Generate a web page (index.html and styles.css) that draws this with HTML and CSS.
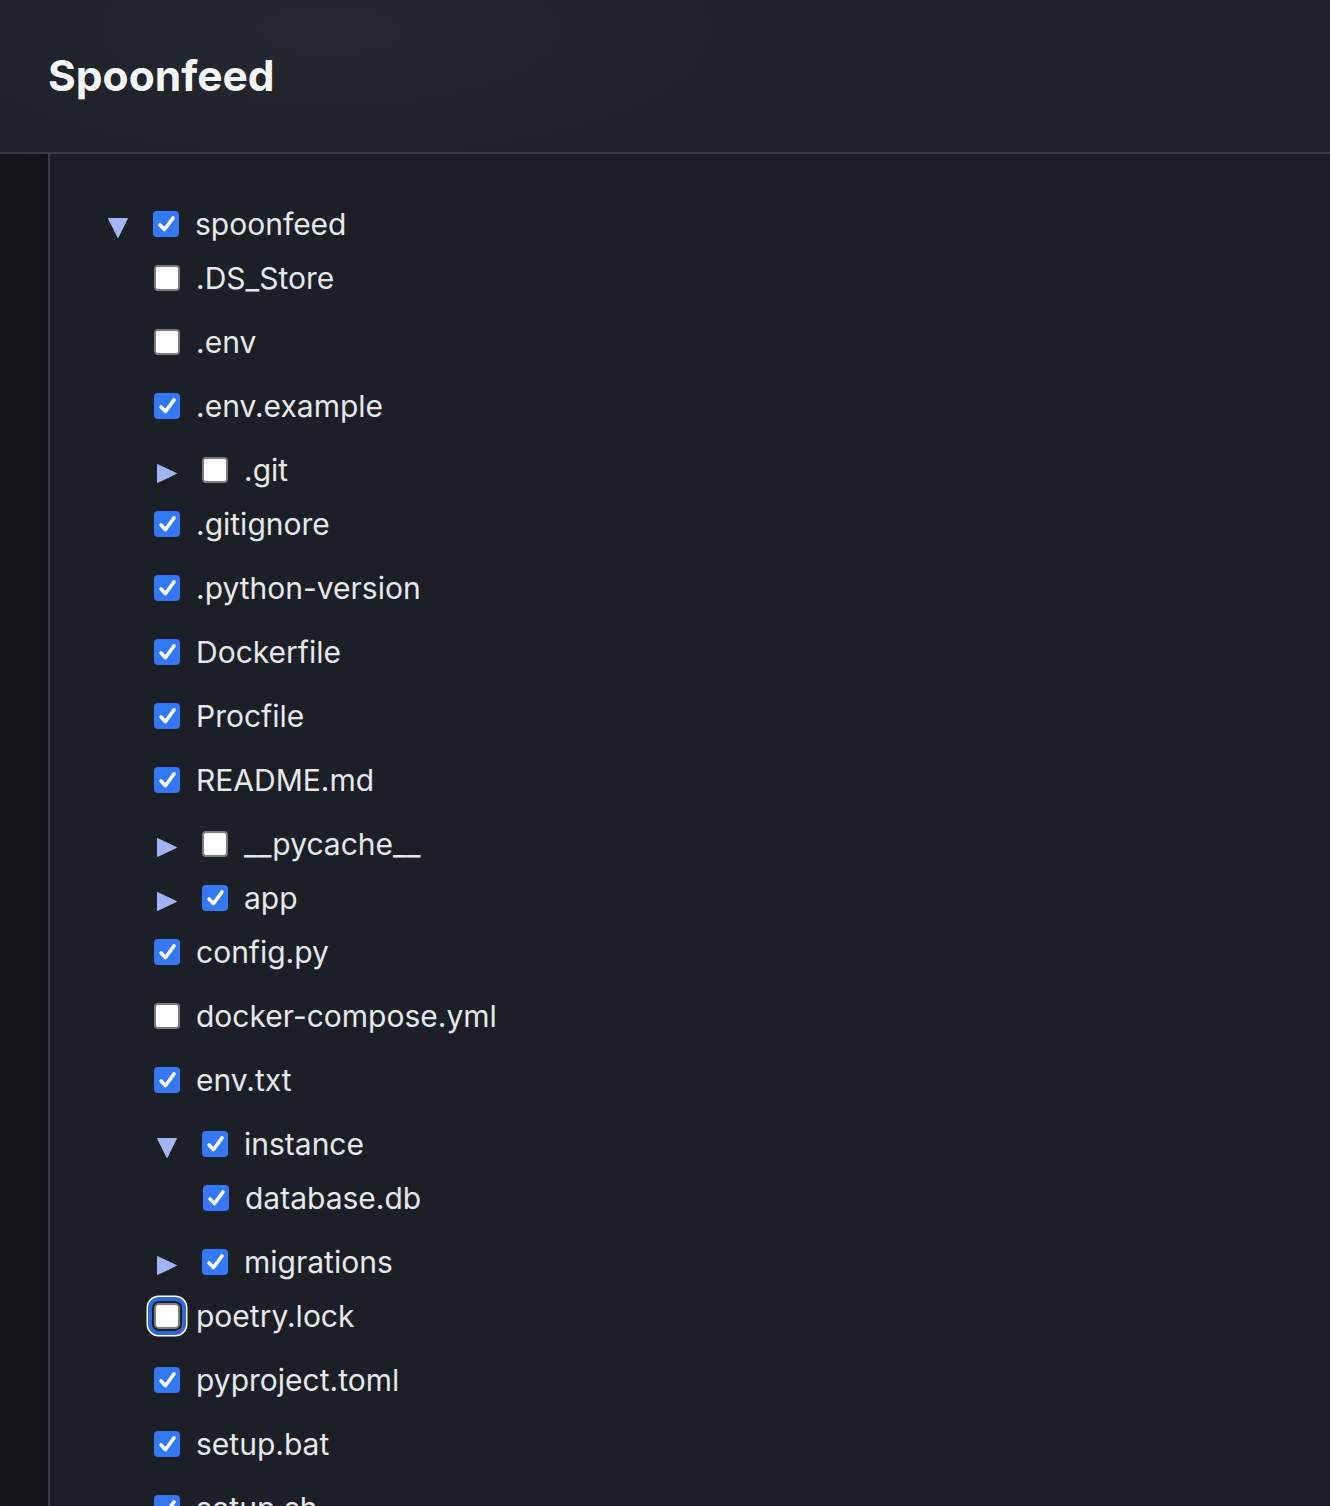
FILE: index.html
```html
<!DOCTYPE html>
<html lang="en">
<head>
<meta charset="utf-8">
<title>Spoonfeed</title>
<link rel="stylesheet" href="styles.css">
</head>
<body>
<header class="topbar">
  <h1 class="title">Spoonfeed</h1>
</header>
<div class="layout">
  <aside class="sidebar"></aside>
  <main class="main">
    <ul class="tree">
      <li class="folder">
        <div class="row folder-row">
          <span class="toggle"><svg class="tri" viewBox="0 0 20 20"><polygon points="0.5,0.5 19.5,0.5 10,19.5"/></svg></span>
          <span class="cb on"><svg viewBox="0 0 26 26"><path d="M7 14 L11.5 18.5 L20 7"/></svg></span>
          <span class="name">spoonfeed</span>
        </div>
        <ul class="tree children">
          <li class="row file"><span class="cb"></span><span class="name">.DS_Store</span></li>
          <li class="row file"><span class="cb"></span><span class="name">.env</span></li>
          <li class="row file"><span class="cb on"><svg viewBox="0 0 26 26"><path d="M7 14 L11.5 18.5 L20 7"/></svg></span><span class="name">.env.example</span></li>
          <li class="folder">
            <div class="row folder-row">
              <span class="toggle"><svg class="tri" viewBox="0 0 20 20"><polygon points="0.5,0.5 19.5,9.5 0.5,18.5"/></svg></span>
              <span class="cb"></span>
              <span class="name">.git</span>
            </div>
          </li>
          <li class="row file"><span class="cb on"><svg viewBox="0 0 26 26"><path d="M7 14 L11.5 18.5 L20 7"/></svg></span><span class="name">.gitignore</span></li>
          <li class="row file"><span class="cb on"><svg viewBox="0 0 26 26"><path d="M7 14 L11.5 18.5 L20 7"/></svg></span><span class="name">.python-version</span></li>
          <li class="row file"><span class="cb on"><svg viewBox="0 0 26 26"><path d="M7 14 L11.5 18.5 L20 7"/></svg></span><span class="name">Dockerfile</span></li>
          <li class="row file"><span class="cb on"><svg viewBox="0 0 26 26"><path d="M7 14 L11.5 18.5 L20 7"/></svg></span><span class="name">Procfile</span></li>
          <li class="row file"><span class="cb on"><svg viewBox="0 0 26 26"><path d="M7 14 L11.5 18.5 L20 7"/></svg></span><span class="name">README.md</span></li>
          <li class="folder">
            <div class="row folder-row">
              <span class="toggle"><svg class="tri" viewBox="0 0 20 20"><polygon points="0.5,0.5 19.5,9.5 0.5,18.5"/></svg></span>
              <span class="cb"></span>
              <span class="name">__pycache__</span>
            </div>
          </li>
          <li class="folder">
            <div class="row folder-row">
              <span class="toggle"><svg class="tri" viewBox="0 0 20 20"><polygon points="0.5,0.5 19.5,9.5 0.5,18.5"/></svg></span>
              <span class="cb on"><svg viewBox="0 0 26 26"><path d="M7 14 L11.5 18.5 L20 7"/></svg></span>
              <span class="name">app</span>
            </div>
          </li>
          <li class="row file"><span class="cb on"><svg viewBox="0 0 26 26"><path d="M7 14 L11.5 18.5 L20 7"/></svg></span><span class="name">config.py</span></li>
          <li class="row file"><span class="cb"></span><span class="name">docker-compose.yml</span></li>
          <li class="row file"><span class="cb on"><svg viewBox="0 0 26 26"><path d="M7 14 L11.5 18.5 L20 7"/></svg></span><span class="name">env.txt</span></li>
          <li class="folder">
            <div class="row folder-row">
              <span class="toggle"><svg class="tri" viewBox="0 0 20 20"><polygon points="0.5,0.5 19.5,0.5 10,19.5"/></svg></span>
              <span class="cb on"><svg viewBox="0 0 26 26"><path d="M7 14 L11.5 18.5 L20 7"/></svg></span>
              <span class="name">instance</span>
            </div>
            <ul class="tree children">
              <li class="row file"><span class="cb on"><svg viewBox="0 0 26 26"><path d="M7 14 L11.5 18.5 L20 7"/></svg></span><span class="name">database.db</span></li>
            </ul>
          </li>
          <li class="folder">
            <div class="row folder-row">
              <span class="toggle"><svg class="tri" viewBox="0 0 20 20"><polygon points="0.5,0.5 19.5,9.5 0.5,18.5"/></svg></span>
              <span class="cb on"><svg viewBox="0 0 26 26"><path d="M7 14 L11.5 18.5 L20 7"/></svg></span>
              <span class="name">migrations</span>
            </div>
          </li>
          <li class="row file"><span class="cb focus"></span><span class="name">poetry.lock</span></li>
          <li class="row file"><span class="cb on"><svg viewBox="0 0 26 26"><path d="M7 14 L11.5 18.5 L20 7"/></svg></span><span class="name">pyproject.toml</span></li>
          <li class="row file"><span class="cb on"><svg viewBox="0 0 26 26"><path d="M7 14 L11.5 18.5 L20 7"/></svg></span><span class="name">setup.bat</span></li>
          <li class="row file"><span class="cb on"><svg viewBox="0 0 26 26"><path d="M7 14 L11.5 18.5 L20 7"/></svg></span><span class="name">setup.sh</span></li>
        </ul>
      </li>
    </ul>
  </main>
</div>
</body>
</html>
```

FILE: styles.css
```css
* { box-sizing: border-box; }

html, body {
  margin: 0;
  padding: 0;
  height: 100%;
}

body {
  background: #1c1f26;
  color: #e6e8ec;
  font-family: Inter, "Noto Sans", "Liberation Sans", sans-serif;
  overflow: hidden;
  display: flex;
  flex-direction: column;
}

.topbar {
  height: 154px;
  flex: none;
  display: flex;
  align-items: center;
  padding-left: 48px;
  border-bottom: 2px solid #393c42;
  background:
    radial-gradient(ellipse 420px 140px at 330px 30px, rgba(255,255,255,0.035), rgba(255,255,255,0) 100%),
    #1e2128;
}

.title {
  margin: 0;
  font-size: 42.5px;
  font-weight: 700;
  color: #f4f5f7;
  padding-bottom: 2px;
}

.layout {
  flex: 1;
  display: flex;
  min-height: 0;
}

.sidebar {
  width: 50px;
  flex: none;
  border-right: 2px solid #393c42;
  background: linear-gradient(90deg, #15171b, #111317);
}

.main {
  flex: 1;
  padding: 42.5px 0 0 55px;
}

.tree {
  list-style: none;
  margin: 0;
  padding: 0;
}

.tree.children {
  padding-left: 49px;
}

.row {
  height: 54px;
  display: flex;
  align-items: center;
}

.file {
  margin-bottom: 10px;
}

.toggle {
  width: 48px;
  flex: none;
  display: flex;
  padding-left: 3px;
  margin-top: 9px;
}

.tri {
  width: 20px;
  height: 20px;
  display: block;
}

.tri polygon {
  fill: #a3b4f5;
  stroke: #a3b4f5;
  stroke-width: 1;
  stroke-linejoin: round;
}

.cb {
  width: 26px;
  height: 26px;
  flex: none;
  border-radius: 4px;
  background: #ffffff;
  border: 2px solid #7d7d80;
  display: flex;
}

.cb.on {
  background: #3478f6;
  border: none;
}

.cb svg {
  width: 26px;
  height: 26px;
  display: block;
}

.cb svg path {
  fill: none;
  stroke: #ffffff;
  stroke-width: 3.6;
  stroke-linecap: round;
  stroke-linejoin: round;
}

.cb.focus {
  box-shadow:
    0 0 0 2px #1c1f26,
    0 0 0 6px #2f66d8,
    0 0 0 7.5px #ffffff;
  border-radius: 5px;
}

.name {
  margin-left: 16px;
  font-size: 30px;
  line-height: 1;
  white-space: nowrap;
}
```
